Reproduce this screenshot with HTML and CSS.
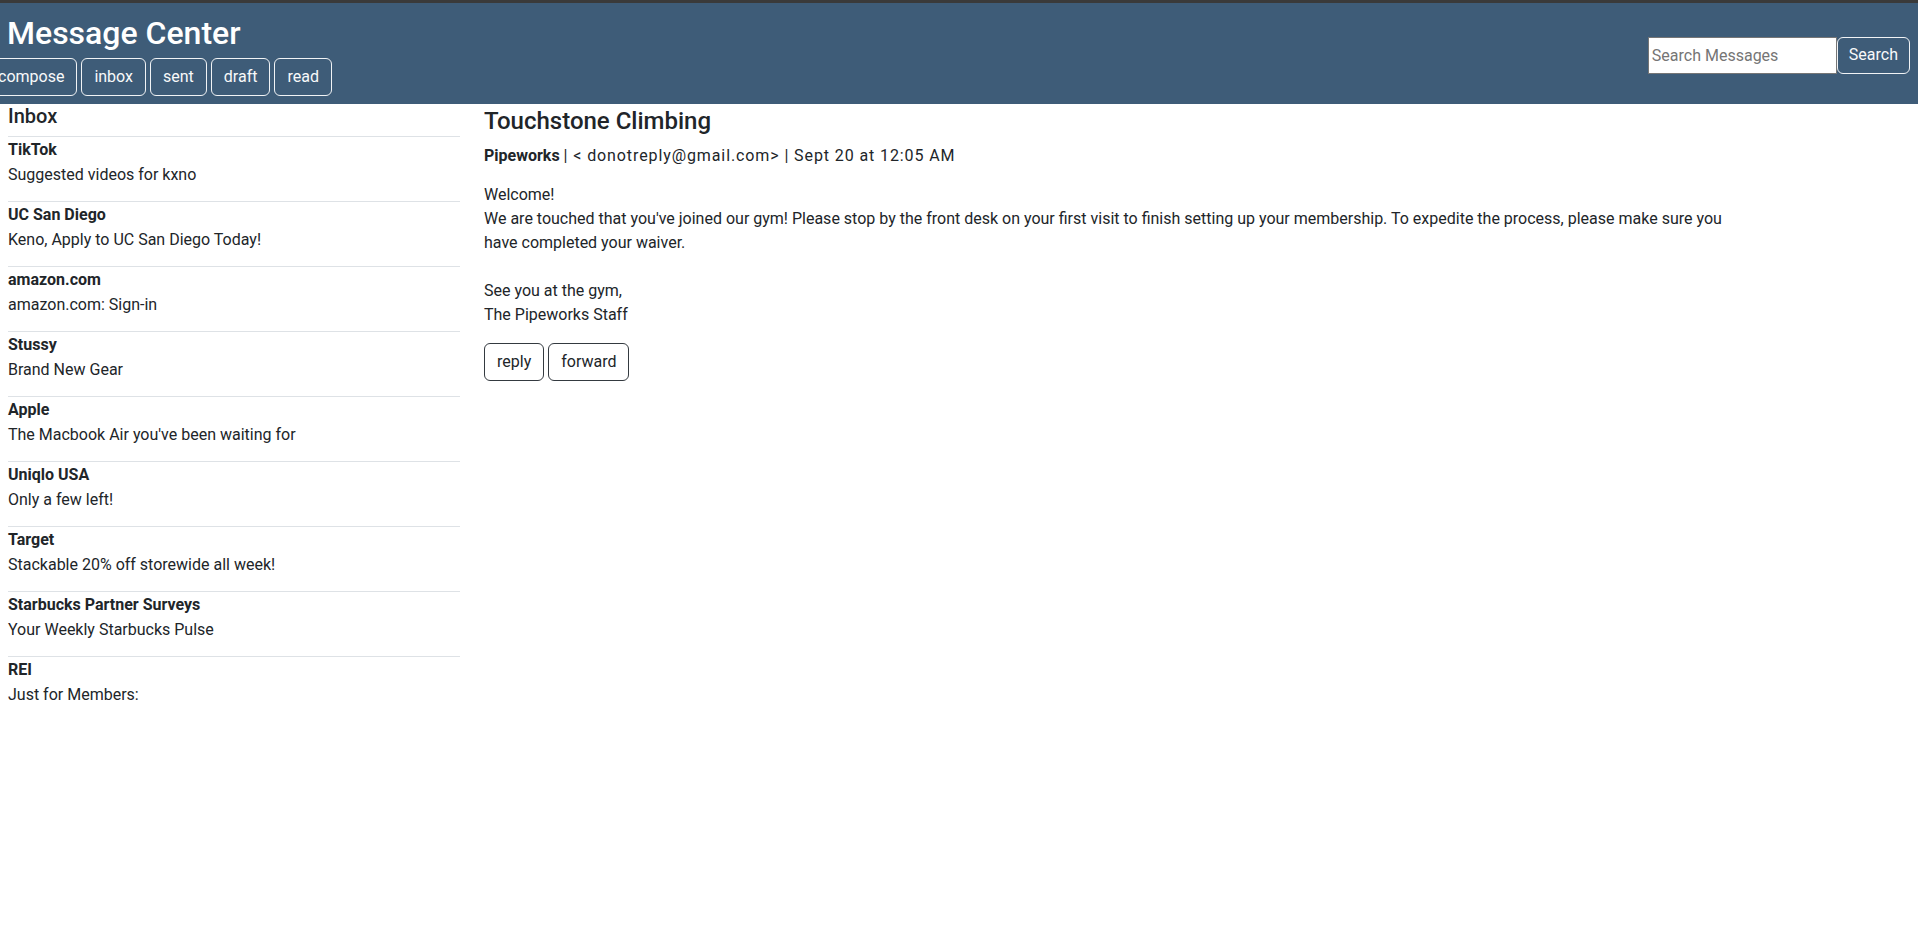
FILE: index.html
```html
<!DOCTYPE html>
<html lang="en">
<head>
<meta charset="utf-8">
<title>Message Center</title>
<link rel="stylesheet" href="styles.css">
</head>
<body>
<div class="topline"></div>
<header class="header">
  <div class="brand">
    <h1 class="title">Message Center</h1>
    <nav class="nav">
      <button class="btn btn-light">compose</button>
      <button class="btn btn-light">inbox</button>
      <button class="btn btn-light">sent</button>
      <button class="btn btn-light">draft</button>
      <button class="btn btn-light">read</button>
    </nav>
  </div>
  <form class="search">
    <input class="search-input" type="text" placeholder="Search Messages">
    <button class="btn btn-light search-btn" type="button">Search</button>
  </form>
</header>
<main class="main">
  <aside class="inbox">
    <h2 class="inbox-title">Inbox</h2>
    <ul class="list">
      <li class="item"><div class="sender">TikTok</div><div class="subject">Suggested videos for kxno</div></li>
      <li class="item"><div class="sender">UC San Diego</div><div class="subject">Keno, Apply to UC San Diego Today!</div></li>
      <li class="item"><div class="sender">amazon.com</div><div class="subject">amazon.com: Sign-in</div></li>
      <li class="item"><div class="sender">Stussy</div><div class="subject">Brand New Gear</div></li>
      <li class="item"><div class="sender">Apple</div><div class="subject">The Macbook Air you've been waiting for</div></li>
      <li class="item"><div class="sender">Uniqlo USA</div><div class="subject">Only a few left!</div></li>
      <li class="item"><div class="sender">Target</div><div class="subject">Stackable 20% off storewide all week!</div></li>
      <li class="item"><div class="sender">Starbucks Partner Surveys</div><div class="subject">Your Weekly Starbucks Pulse</div></li>
      <li class="item"><div class="sender">REI</div><div class="subject">Just for Members:</div></li>
    </ul>
  </aside>
  <section class="message">
    <h3 class="msg-title">Touchstone Climbing</h3>
    <div class="meta"><b>Pipeworks</b> <span class="meta-rest">| &lt; donotreply@gmail.com&gt; | Sept 20 at 12:05 AM</span></div>
    <p class="body">Welcome!<br>We are touched that you've joined our gym! Please stop by the front desk on your first visit to finish setting up your membership. To expedite the process, please make sure you have completed your waiver.<br><br>See you at the gym,<br>The Pipeworks Staff</p>
    <div class="actions">
      <button class="btn btn-dark">reply</button>
      <button class="btn btn-dark">forward</button>
    </div>
  </section>
</main>
</body>
</html>
```
FILE: styles.css
```css
* { box-sizing: border-box; }
body {
  margin: 0;
  font-family: "Segoe UI", Roboto, "Noto Sans", sans-serif;
  font-size: 16px;
  line-height: 1.5;
  color: #212529;
  background: #fff;
}
.topline { height: 3px; background: #3a3a3a; }
.header {
  display: flex;
  justify-content: space-between;
  align-items: center;
  background: #3e5c78;
  padding: 11px 8px 8px 0;
}
.brand { display: flex; flex-direction: column; }
.title {
  margin: 0 0 6px 0;
  padding-left: 7px;
  font-size: 32px;
  font-weight: 500;
  line-height: 38px;
  color: #fff;
}
.nav { display: flex; gap: 4px; margin-left: -15px; }
.btn {
  font-family: inherit;
  font-size: 16px;
  line-height: 24px;
  padding: 6px 12px;
  border-radius: 6px;
  background: transparent;
  cursor: pointer;
}
.btn-light { border: 1px solid #f1f3f5; color: #f8f9fa; }
.btn-dark { border: 1px solid #343a40; color: #212529; }
.search { display: flex; align-items: center; }
.search-input {
  width: 189px;
  height: 37px;
  border: 1px solid #767676;
  padding: 1px 3px;
  font-family: inherit;
  font-size: 16px;
  color: #212529;
  background: #fff;
  outline: none;
}
.search-input::placeholder { color: #757575; }
.search-btn { height: 37px; padding: 0 11px; }
.main { display: flex; gap: 24px; padding-left: 8px; }
.inbox { width: 452px; flex: none; }
.inbox-title {
  margin: 0 0 8px 0;
  padding-top: 1px;
  font-size: 20px;
  font-weight: 500;
  line-height: 23px;
}
.list { list-style: none; margin: 0; padding: 0; }
.item { border-top: 1px solid #dee2e6; padding-bottom: 14px; }
.sender { font-weight: 700; padding-top: 1px; }
.subject { padding-top: 1px; }
.message { width: 1270px; flex: none; }
.msg-title {
  margin: 0 0 8px 0;
  padding-top: 3px;
  font-size: 24px;
  font-weight: 500;
  line-height: 29px;
}
.meta { font-size: 16px; line-height: 24px; margin-bottom: 14px; }
.meta-rest { letter-spacing: 0.9px; }
.body { margin: 0 0 16px 0; padding-top: 1px; line-height: 24px; }
.actions { display: flex; gap: 4px; }
```
